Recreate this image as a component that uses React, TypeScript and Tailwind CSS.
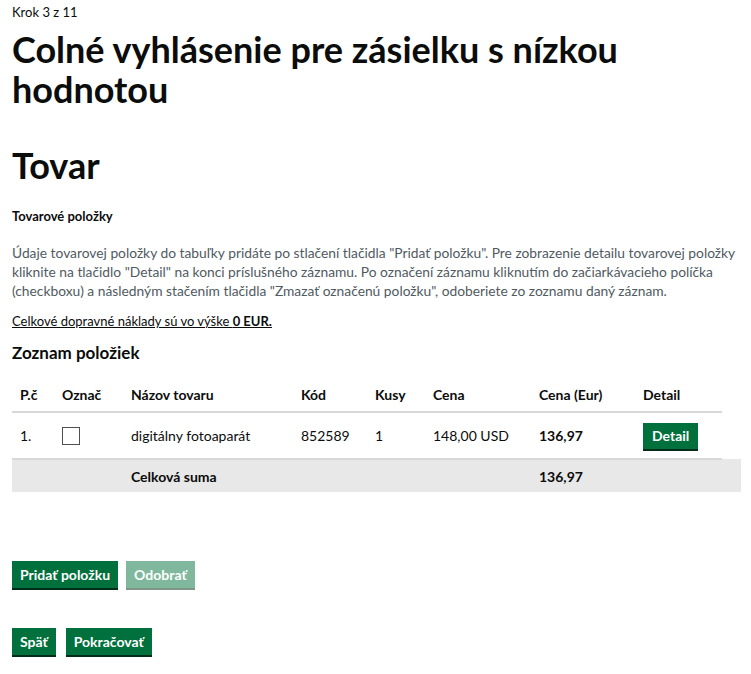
const font = { fontFamily: 'Lato, "Noto Sans", sans-serif' }

const btn = 'px-[8px] h-[27px] text-[14px] font-bold text-white leading-none'
const green = 'bg-[#00703c] shadow-[0_2px_0_#002d18]'
const line = 'border-b-2 border-[#d8d8d8]'

export default function App() {
  return (
    <div className="px-3 pt-[4px] pb-8 text-[#0b0c0c] bg-white" style={font}>
      <div className="text-[13px] leading-[16px]">Krok 3 z 11</div>
      <h1 className="mt-[9px] text-[36px] leading-[40px] font-bold">
        Colné vyhlásenie pre zásielku s nízkou hodnotou
      </h1>

      <h2 className="mt-[36px] text-[36px] leading-[40px] font-bold">Tovar</h2>

      <h3 className="mt-[22px] text-[13px] leading-[18px] font-bold">Tovarové položky</h3>

      <p className="mt-[18px] text-[13.8px] leading-[19px] text-[#505a5f]">
        Údaje tovarovej položky do tabuľky pridáte po stlačení tlačidla "Pridať položku". Pre zobrazenie
        detailu tovarovej položky kliknite na tlačidlo "Detail" na konci príslušného záznamu. Po označení
        záznamu kliknutím do začiarkávacieho políčka (checkboxu) a následným stačením tlačidla "Zmazať
        označenú položku", odoberiete zo zoznamu daný záznam.
      </p>

      <p className="mt-[12px] text-[13px] leading-[18px] underline">
        Celkové dopravné náklady sú vo výške <b>0 EUR.</b>
      </p>

      <h3 className="mt-[12px] text-[17px] leading-[22px] font-bold">Zoznam položiek</h3>

      <table className="mt-[13px] w-[729px] text-[14px] border-collapse">
        <thead>
          <tr className="font-bold text-left">
            <th className={`w-[50px] pl-2 h-[35px] ${line}`}>P.č</th>
            <th className={`w-[69px] ${line}`}>Označ</th>
            <th className={`w-[170px] ${line}`}>Názov tovaru</th>
            <th className={`w-[74px] ${line}`}>Kód</th>
            <th className={`w-[58px] ${line}`}>Kusy</th>
            <th className={`w-[106px] ${line}`}>Cena</th>
            <th className={`w-[104px] ${line}`}>Cena (Eur)</th>
            <th className={`w-[79px] ${line}`}>Detail</th>
            <th className="w-[19px]"></th>
          </tr>
        </thead>
        <tbody>
          <tr>
            <td className={`pl-2 h-[47px] ${line}`}>1.</td>
            <td className={line}>
              <div className="w-[18px] h-[18px] border border-[#505050] bg-white" />
            </td>
            <td className={line}>digitálny fotoaparát</td>
            <td className={line}>852589</td>
            <td className={line}>1</td>
            <td className={line}>148,00 USD</td>
            <td className={`${line} font-bold`}>136,97</td>
            <td className={line}>
              <button className={`px-[9px] h-[26px] text-[14px] font-bold text-white ${green}`}>
                Detail
              </button>
            </td>
            <td></td>
          </tr>
          <tr className="bg-[#e8e8e8] font-bold">
            <td className="h-[33px]"></td>
            <td></td>
            <td>Celková suma</td>
            <td></td>
            <td></td>
            <td></td>
            <td>136,97</td>
            <td></td>
            <td></td>
          </tr>
        </tbody>
      </table>

      <div className="mt-[69px] flex gap-2">
        <button className={`${btn} ${green}`}>Pridať položku</button>
        <button className={`${btn} bg-[#80b89d] shadow-[0_2px_0_#80968b]`}>Odobrať</button>
      </div>

      <div className="mt-[40px] flex gap-[10px]">
        <button className={`${btn} ${green}`}>Späť</button>
        <button className={`${btn} ${green}`}>Pokračovať</button>
      </div>
    </div>
  )
}
